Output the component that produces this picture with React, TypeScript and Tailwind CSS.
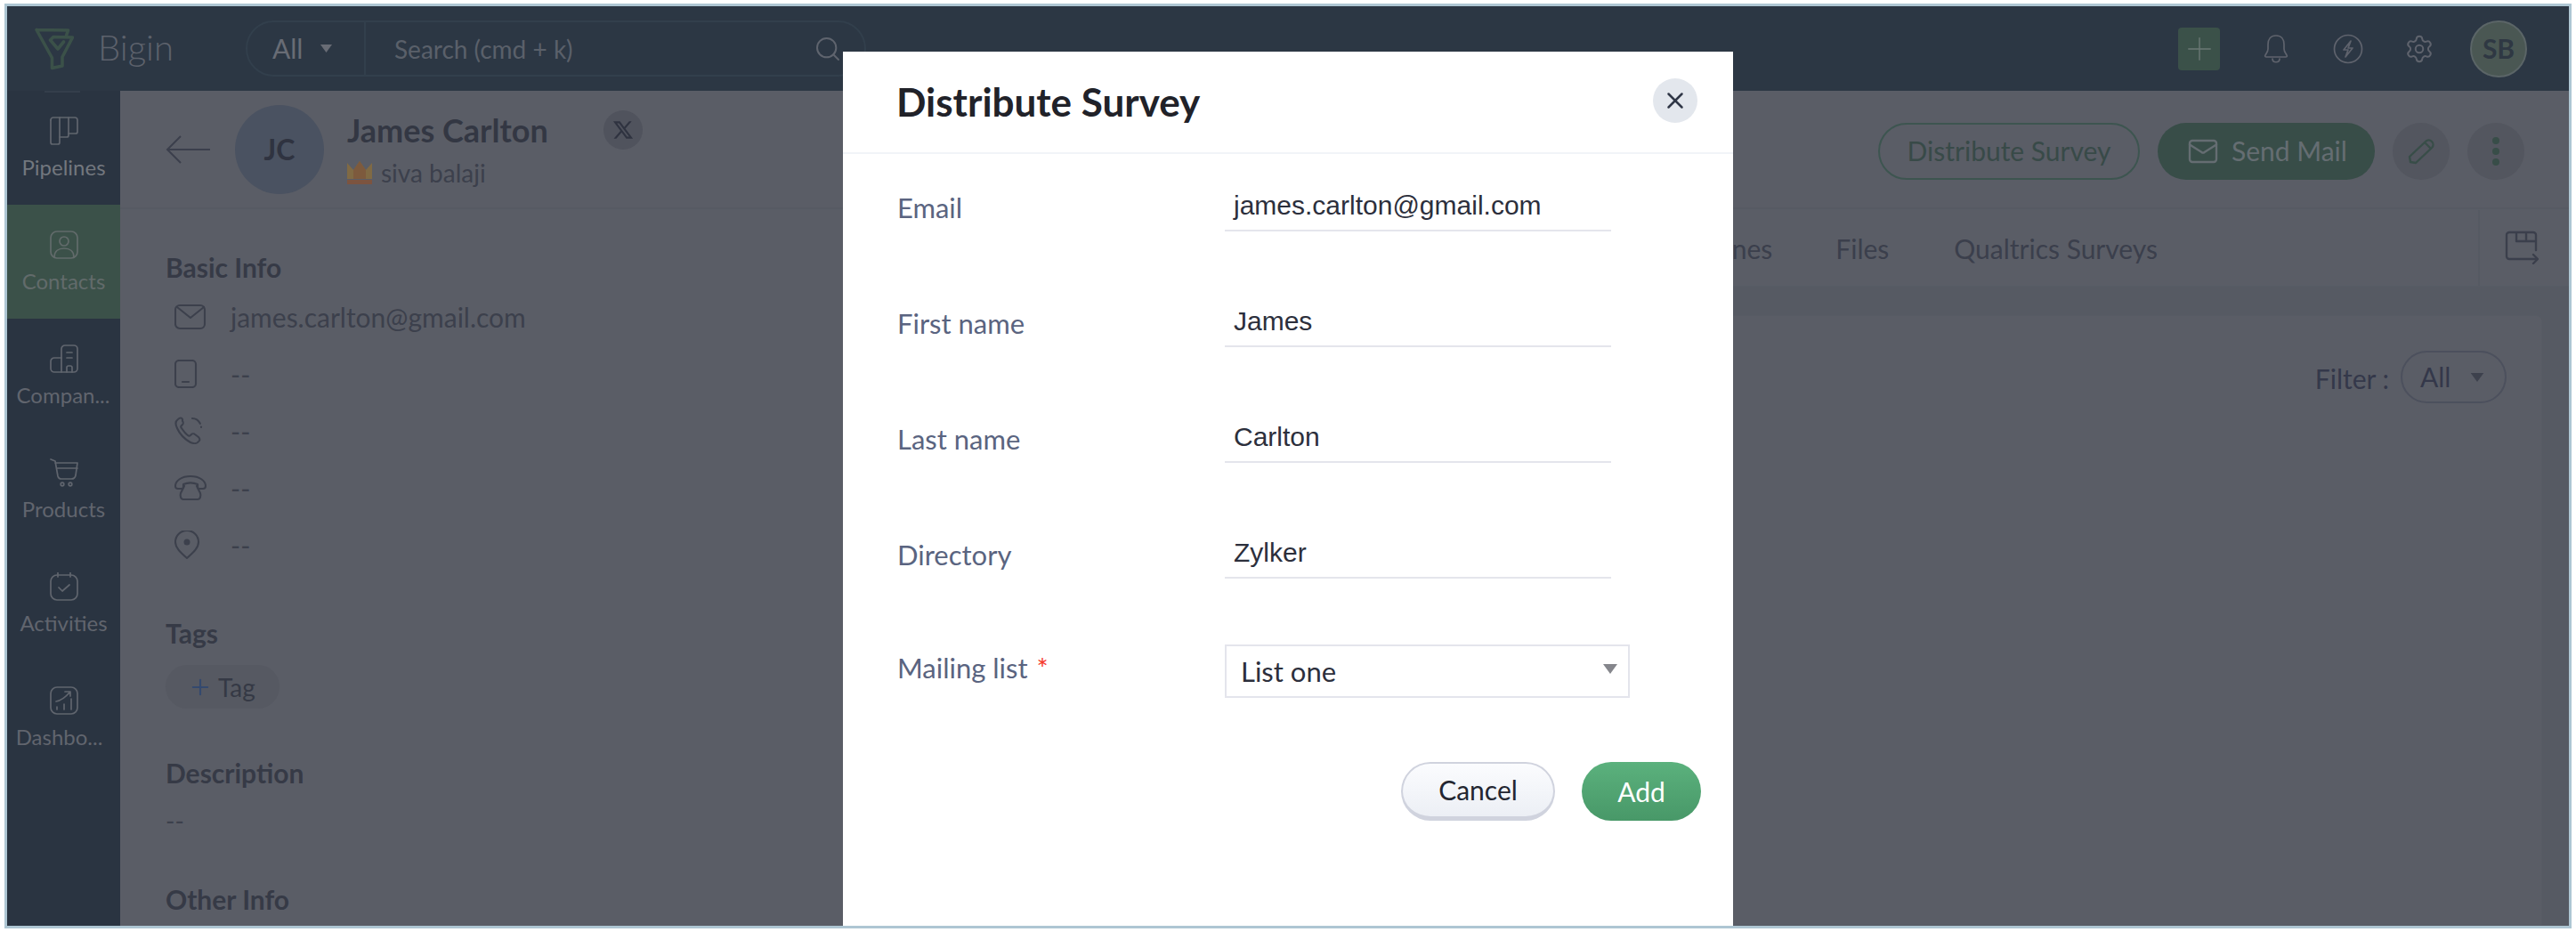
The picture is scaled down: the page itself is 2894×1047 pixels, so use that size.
import { ReactNode } from "react"
import { Mail, Plus, Search, Settings, X } from "lucide-react"
import { RiTwitterXLine } from "react-icons/ri"

function Caret({ className }: { className: string }) {
    return (
        <svg viewBox="0 0 16 11" className={className} fill="currentColor">
            <path d="M0 0h16L8 11z" />
        </svg>
    )
}

function Logo() {
    return (
        <svg viewBox="0 0 44 48" className="w-[44px] h-[48px]" fill="none" stroke="#3b5149" strokeWidth="3.6" strokeLinejoin="round" strokeLinecap="round">
            <path d="M2 2.5L37.5 3 35.5 9M2 2.5L19.5 34v11.5L31 43V33L42.5 11 21 10.5 17.5 14 26 24l6.5-8" />
        </svg>
    )
}

function Icon({ children, className = "w-[32px] h-[32px]" }: { children: ReactNode; className?: string }) {
    return (
        <svg viewBox="0 0 32 32" className={className} fill="none" stroke="currentColor" strokeWidth="1.7" strokeLinecap="round" strokeLinejoin="round">
            {children}
        </svg>
    )
}

const navItems = [
    {
        label: "Pipelines",
        text: "text-[#72777e]",
        icon: <><path d="M1 4a3 3 0 0 1 3-3h24a3 3 0 0 1 3 3v13a2 2 0 0 1-2 2h-8" /><path d="M11 1v28a2 2 0 0 1-2 2H3a2 2 0 0 1-2-2V4" /><path d="M21 1v20a2 2 0 0 1-2 2h-8" /></>,
    },
    {
        label: "Contacts",
        text: "text-[#626b6b]",
        active: true,
        icon: <><rect x="1" y="1" width="30" height="30" rx="7" /><circle cx="16" cy="12" r="5" /><path d="M5 30c0-7 5-10 11-10s11 3 11 10" /></>,
    },
    {
        label: "Compan...",
        text: "text-[#61656e] pr-[1px]",
        icon: <><path d="M13 31V5a4 4 0 0 1 4-4h10a4 4 0 0 1 4 4v22a4 4 0 0 1-4 4z" /><path d="M13 15H5a4 4 0 0 0-4 4v8a4 4 0 0 0 4 4h8" /><path d="M19 9h6M19 15h6M19 31v-5a2 2 0 0 1 2-2h2a2 2 0 0 1 2 2v5" /></>,
    },
    {
        label: "Products",
        text: "text-[#61656e]",
        icon: <><path d="M1 1l5 2 3 17a4 4 0 0 0 4 3h11a5 5 0 0 0 5-4l2-14H6" /><path d="M8 11h23" /><circle cx="14" cy="29" r="1.8" /><circle cx="23" cy="29" r="1.8" /></>,
    },
    {
        label: "Activities",
        text: "text-[#61656e]",
        icon: <><rect x="1" y="3" width="30" height="28" rx="7" /><path d="M9 0v5M23 0v5M10 17l4 4 8-7" /></>,
    },
    {
        label: "Dashbo...",
        text: "text-[#61656e] pr-[10px]",
        icon: <><rect x="1" y="1" width="30" height="30" rx="7" /><path d="M7 17c5-1 10-4 15-10M17 6h6v5M8 26v-3M16 26v-6M24 26V14" /></>,
    },
]

function Sidebar() {
    return (
        <aside className="relative w-[127px] shrink-0 flex flex-col bg-[#2a3441]">
            <div className="absolute left-[42px] top-0 w-[40px] h-[2px] bg-[#343e4b]" />
            {navItems.map((item) => (
                <div
                    key={item.label}
                    className={`h-[128px] flex flex-col items-center pt-[29px] ${item.active ? "bg-[#3b5149]" : ""}`}
                >
                    <Icon className={`w-[32px] h-[32px] ${item.active ? "text-[#626b6b]" : "text-[#60656e]"}`}>{item.icon}</Icon>
                    <span className={`mt-[10px] text-[24px] leading-[30px] whitespace-nowrap ${item.text}`}>{item.label}</span>
                </div>
            ))}
        </aside>
    )
}

function TopBar() {
    return (
        <header className="h-[95px] shrink-0 flex items-center bg-[#2c3744] pl-[31px] pr-[47px]">
            <Logo />
            <span className="ml-[27px] -mt-[3px] text-[40px] font-light text-[#5d626c] w-[166px]">Bigin</span>
            <div className="w-[697px] h-[63px] flex items-center rounded-full border-2 border-[#323f4c]">
                <div className="w-[133px] h-full flex items-center pl-[28px] border-r-2 border-[#323f4c]">
                    <span className="text-[30px] text-[#686c75]">All</span>
                    <Caret className="ml-[19px] w-[15px] h-[9px] text-[#686c75]" />
                </div>
                <span className="ml-[32px] text-[28px] text-[#5a606a]">Search (cmd + k)</span>
                <Search className="ml-auto mr-[25px] w-[32px] h-[32px] text-[#5f646e]" strokeWidth={1.5} />
            </div>
            <div className="ml-auto flex items-center">
                <div className="w-[47px] h-[48px] rounded-[4px] bg-[#3b5149] flex items-center justify-center">
                    <Plus className="w-[42px] h-[42px] text-[#6c7875]" strokeWidth={0.8} />
                </div>
                <svg viewBox="0 0 28 32" className="ml-[49px] w-[28px] h-[32px] text-[#5f636d]" fill="none" stroke="currentColor" strokeWidth="1.7" strokeLinejoin="round">
                    <path d="M14 1C8 1 5 5 5 11v5c0 3-2 5-3 7-1 1 0 2 1 2h22c1 0 2-1 1-2-1-2-3-4-3-7v-5c0-6-3-10-9-10z" />
                    <path d="M10 27c0 5 8 5 8 0" strokeLinecap="round" />
                </svg>
                <svg viewBox="0 0 34 34" className="ml-[50px] w-[34px] h-[34px] text-[#5f636d]" fill="none" stroke="currentColor" strokeWidth="1.7">
                    <circle cx="17" cy="17" r="15.5" />
                    <path d="M20 8l-8 10h5l-3 8 8-10h-5z" strokeLinejoin="round" />
                </svg>
                <Settings className="ml-[46px] w-[34px] h-[34px] text-[#5f636d]" strokeWidth={1.4} />
                <div className="ml-[40px] w-[64px] h-[64px] rounded-full bg-[#4a5753] border-2 border-[#5b6567] flex items-center justify-center text-[30px] font-bold text-[#2f3843]">
                    SB
                </div>
            </div>
        </header>
    )
}

function ContactHeader() {
    return (
        <div className="h-[133px] shrink-0 flex items-center border-b-2 border-[#565a63] pl-[51px] pr-[50px]">
            <svg viewBox="0 0 50 32" className="w-[50px] h-[32px] text-[#3b3f4c]" fill="none" stroke="currentColor" strokeWidth="2">
                <path d="M50 16H2M17 1L2 16l15 15" />
            </svg>
            <div className="ml-[28px] w-[100px] h-[100px] rounded-full bg-[#4a5261] flex items-center justify-center text-[32px] font-bold text-[#2f3340]">
                JC
            </div>
            <div className="ml-[26px] w-[288px] -mt-[1px]">
                <div className="text-[36px] leading-[46px] font-bold text-[#333743]">James Carlton</div>
                <div className="mt-[8px] flex items-center text-[28px] leading-[34px] text-[#3c404c]">
                    <svg viewBox="0 0 28 26" className="w-[28px] h-[26px] mr-[10px]">
                        <path d="M0 2l7 8 7-10 7 10 7-8v18H0z" fill="#806a44" />
                        <path d="M14 0l7 10v10H7V10z" fill="#7d5a3d" />
                        <rect y="21" width="28" height="5" fill="#7c5440" />
                    </svg>
                    siva balaji
                </div>
            </div>
            <div className="self-start mt-[22px] w-[44px] h-[44px] rounded-full bg-[#50535d] flex items-center justify-center text-[#2f3340]">
                <RiTwitterXLine className="w-[26px] h-[26px]" />
            </div>
            <div className="ml-auto mt-[4px] flex items-center gap-[20px]">
                <div className="w-[294px] h-[64px] rounded-full border-2 border-[#3d5550] flex items-center justify-center text-[30px] text-[#384a48]">
                    Distribute Survey
                </div>
                <div className="flex items-center w-[244px] h-[64px] rounded-full bg-[#384d48] pl-[33px] text-[30px] text-[#656d72]">
                    <Mail className="w-[36px] h-[36px] mr-[14px]" strokeWidth={1.6} />
                    Send Mail
                </div>
                <div className="w-[64px] h-[64px] rounded-full bg-[#53565f] flex items-center justify-center text-[#384d48]">
                    <svg viewBox="0 0 30 30" className="w-[30px] h-[30px]" fill="none" stroke="currentColor" strokeWidth="2.4" strokeLinejoin="round">
                        <path d="M3 27l-1-6L20 4c2-2 5-2 7 0s2 5 0 7L9 28zM19 5l7 7" />
                    </svg>
                </div>
                <div className="w-[64px] h-[64px] rounded-full bg-[#53565f] flex flex-col items-center justify-center gap-[4px]">
                    <span className="w-[8px] h-[8px] rounded-full bg-[#384d48]" />
                    <span className="w-[8px] h-[8px] rounded-full bg-[#384d48]" />
                    <span className="w-[8px] h-[8px] rounded-full bg-[#384d48]" />
                </div>
            </div>
        </div>
    )
}

const infoRows = [
    { text: "james.carlton@gmail.com", icon: <><rect x="1" y="3" width="33" height="26" rx="5" /><path d="M3 5l15 12L33 5" /></> },
    { text: "--", icon: <><rect x="1" y="1" width="23" height="30" rx="4" /><path d="M9 25h7" /></> },
    { text: "--", icon: <><path d="M4 3c-3 2-3 6-1 10 3 7 8 12 15 16 4 2 8 1 10-2 1-2 0-3-1-4l-4-3c-1-1-3-1-4 0l-1 1c-1 1-2 1-3 0-3-2-5-5-7-8-1-1-1-2 0-3l1-1c1-1 1-3 0-4L9 3C8 1 6 1 4 3z" /><path d="M20 2c5 0 10 5 10 10" strokeDasharray="11 4" /></> },
    { text: "--", icon: <><path d="M1 14C1 8 8 3 18 3s17 5 17 11c0 2-1 3-3 3h-4c-1 0-2-1-2-2v-3c-5-2-11-2-16 0v3c0 1-1 2-2 2H4c-2 0-3-1-3-3z" /><path d="M11 14l-4 8c-1 3 0 7 3 7h16c3 0 4-4 3-7l-4-8" /></> },
    { text: "--", icon: <><path d="M14 31C6 24 1 19 1 13a13 13 0 0 1 26 0c0 6-5 11-13 18z" /><circle cx="14" cy="13" r="3.5" fill="currentColor" stroke="none" /></> },
]

function LeftColumn() {
    return (
        <div className="w-[812px] shrink-0 pl-[51px] pt-[46px]">
            <h2 className="text-[30px] leading-[38px] font-bold text-[#363a46]">Basic Info</h2>
            <div className="mt-[5px]">
                {infoRows.map((row, i) => (
                    <div key={i} className="h-[64px] flex items-center text-[#3c404c]">
                        <span className="w-[73px] pl-[10px]">
                            <svg viewBox="0 0 36 32" className="w-[36px] h-[32px]" fill="none" stroke="currentColor" strokeWidth="2.1" strokeLinecap="round" strokeLinejoin="round">
                                {row.icon}
                            </svg>
                        </span>
                        <span className="text-[30px]">{row.text}</span>
                    </div>
                ))}
            </div>
            <h2 className="mt-[48px] text-[30px] leading-[38px] font-bold text-[#363a46]">Tags</h2>
            <div className="mt-[17px] w-[128px] h-[49px] rounded-full bg-[#565962] flex items-center pl-[25px] text-[28px] text-[#353945]">
                <Plus className="w-[28px] h-[28px] text-[#34496e] mr-[6px]" strokeWidth={1.8} />
                Tag
            </div>
            <h2 className="mt-[53px] text-[30px] leading-[38px] font-bold text-[#363a46]">Description</h2>
            <p className="mt-[17px] text-[28px] leading-[36px] text-[#3c404c]">--</p>
            <h2 className="mt-[51px] text-[30px] leading-[38px] font-bold text-[#363a46]">Other Info</h2>
        </div>
    )
}

function RightColumn() {
    return (
        <div className="flex-1 min-w-0 flex flex-col overflow-hidden">
            <div className="h-[87px] shrink-0 flex items-center justify-end text-[30px] text-[#3b3f4c] border-b border-[#575b64]">
                <span className="mt-[2px]">Timelines</span>
                <span className="mt-[2px] ml-[71px]">Files</span>
                <span className="mt-[2px] ml-[73px]">Qualtrics Surveys</span>
                <div className="ml-[360px] h-[85px] w-[102px] border-l-2 border-[#565a63] flex items-center pl-[28px] shrink-0">
                    <svg viewBox="0 0 38 38" className="w-[38px] h-[38px] text-[#3b3f4c]" fill="none" stroke="currentColor" strokeWidth="2.4" strokeLinecap="round" strokeLinejoin="round">
                        <path d="M35 22V5a3 3 0 0 0-3-3H5a3 3 0 0 0-3 3v24a3 3 0 0 0 3 3h32M32 27l5 5-5 5M13 3v9h22M24 3v9" />
                    </svg>
                </div>
            </div>
            <div className="flex-1 bg-[#565a63] pt-[32px] pr-[30px]">
                <div className="h-full rounded-t-[6px] bg-[#5a5d66] border border-[#575b64] flex justify-end items-start pt-[39px] pr-[39px]">
                    <span className="text-[30px] text-[#34384a] mt-[9px] mr-[13px]">Filter :</span>
                    <div className="w-[119px] h-[59px] rounded-full border-2 border-[#4c505d] flex items-center pl-[20px] text-[30px] text-[#34384a]">
                        All
                        <Caret className="ml-[22px] w-[16px] h-[10px] text-[#3d414d]" />
                    </div>
                </div>
            </div>
        </div>
    )
}

const fields = [
    { label: "Email", value: "james.carlton@gmail.com" },
    { label: "First name", value: "James" },
    { label: "Last name", value: "Carlton" },
    { label: "Directory", value: "Zylker" },
]

function SurveyModal() {
    return (
        <div className="absolute left-[939px] top-[51px] bottom-0 w-[1000px] bg-white flex flex-col">
            <div className="h-[115px] shrink-0 flex items-center justify-between border-b-2 border-[#f1f4f8] pl-[60px] pr-[40px]">
                <h1 className="-mt-[2px] text-[44px] font-bold text-[#212229]">Distribute Survey</h1>
                <button className="-mt-[4px] w-[50px] h-[50px] rounded-full bg-[#e3e7ed] flex items-center justify-center text-[#303747]">
                    <X className="w-[30px] h-[30px]" strokeWidth={2} />
                </button>
            </div>
            <div className="pl-[61px] pr-[36px]">
                {fields.map((field) => (
                    <div key={field.label} className="h-[130px] flex items-start">
                        <label className="w-[368px] mt-[41px] text-[31px] leading-[38px] text-[#5a6480]">{field.label}</label>
                        <div className="mt-[31px] w-[434px] h-[56px] border-b-2 border-[#e4e5ec] pl-[10px] pt-[8px] text-[30px] leading-[38px] text-[#2c2f3c] font-['Liberation_Sans',sans-serif]">
                            {field.value}
                        </div>
                    </div>
                ))}
                <div className="flex items-start">
                    <label className="w-[368px] mt-[38px] text-[31px] leading-[38px] text-[#5a6480]">
                        Mailing list <span className="ml-[2px] text-[#f5372a]">*</span>
                    </label>
                    <div className="mt-[31px] w-[455px] h-[60px] border-2 border-[#e4e5ec] flex items-center pl-[16px] pr-[12px] text-[31px] text-[#2c2f3c]">
                        List one
                        <Caret className="ml-auto -mt-[6px] w-[16px] h-[11px] text-[#85868c]" />
                    </div>
                </div>
                <div className="mt-[72px] flex justify-end gap-[30px]">
                    <button className="w-[173px] h-[66px] rounded-full border-2 border-b-[5px] border-[#d0d3de] bg-gradient-to-b from-[#fbfcfe] to-[#eceff5] text-[30px] text-[#232631]">
                        Cancel
                    </button>
                    <button className="w-[134px] h-[66px] rounded-full bg-gradient-to-b from-[#5bb17d] to-[#489868] text-[30px] text-white">
                        Add
                    </button>
                </div>
            </div>
        </div>
    )
}

export default function App() {
    return (
        <div className="w-[2894px] h-[1047px] bg-white pl-[5px] pr-[5px] pt-[4px] pb-[4px] font-['Lato',sans-serif]">
            <div className="relative w-full h-full flex flex-col overflow-hidden border-[3px] border-[#aec6d3]">
                <TopBar />
                <div className="flex flex-1 min-h-0">
                    <Sidebar />
                    <main className="flex-1 min-w-0 flex flex-col bg-[#5a5d66]">
                        <ContactHeader />
                        <div className="flex flex-1 min-h-0">
                            <LeftColumn />
                            <RightColumn />
                        </div>
                    </main>
                </div>
                <SurveyModal />
            </div>
        </div>
    )
}
